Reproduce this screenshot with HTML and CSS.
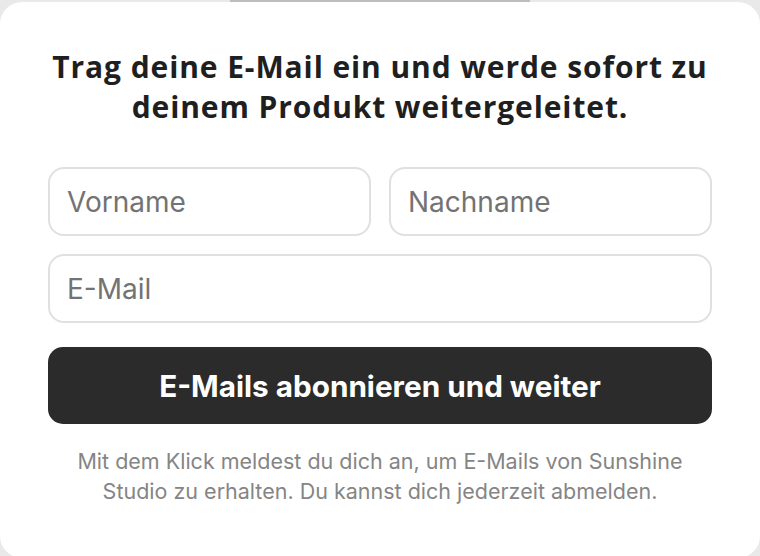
FILE: index.html
```html
<!DOCTYPE html>
<html lang="de">

<head>
    <title>Newsletter</title>
    <meta charset="utf-8">
    <meta name="viewport" content="width=device-width, initial-scale=1.0">
    <link rel="stylesheet" href="styles.css">
</head>

<body>
    <div class="top-handle"></div>
    <div class="card">
        <h2 class="headline">
            Trag deine E-Mail ein und werde sofort zu<br>
            deinem Produkt weitergeleitet.
        </h2>
        <form class="signup-form" onsubmit="return false">
            <div class="name-row">
                <input class="field" type="text" placeholder="Vorname">
                <input class="field" type="text" placeholder="Nachname">
            </div>
            <input class="field" type="email" placeholder="E-Mail">
            <button class="btn-subscribe" type="submit">E-Mails abonnieren und weiter</button>
        </form>
        <p class="legal">
            Mit dem Klick meldest du dich an, um E-Mails von Sunshine<br>
            Studio zu erhalten. Du kannst dich jederzeit abmelden.
        </p>
    </div>
</body>

</html>
```

FILE: styles.css
```css
body {
    padding: 0;
    margin: 0;
    overflow: hidden;
    background: #e9e9e9;
    height: 556px;
}

.top-handle {
    position: absolute;
    top: 0;
    left: 230px;
    width: 300px;
    height: 2px;
    background: #bdbdbd;
}

.card {
    box-sizing: border-box;
    height: 556px;
    margin-top: 2px;
    padding: 45px 48px 0;
    background: #FFFFFF;
    border-radius: 22px;
    text-align: center;
}

.headline {
    font-family: 'Open Sans', sans-serif;
    font-weight: 700;
    font-size: 30px;
    line-height: 40px;
    letter-spacing: 0.9px;
    color: #1f1f1f;
    margin: 0 0 40px;
}

.signup-form {
    display: flex;
    flex-direction: column;
    gap: 18px;
}

.name-row {
    display: flex;
    gap: 18px;
}

.field {
    box-sizing: border-box;
    width: 100%;
    height: 69px;
    padding: 0 17px;
    border: 2px solid #e0e0e0;
    border-radius: 16px;
    font-family: 'Inter', sans-serif;
    font-size: 28px;
    color: #333;
    background: #FFFFFF;
    outline: none;
}

.name-row .field {
    flex: 1;
    min-width: 0;
}

.field::placeholder {
    color: #737373;
}

.btn-subscribe {
    height: 77px;
    margin-top: 6px;
    border: none;
    border-radius: 15px;
    background: #2b2b2b;
    color: #FFFFFF;
    font-family: 'Inter', sans-serif;
    font-weight: 700;
    font-size: 29.7px;
    cursor: pointer;
}

.legal {
    font-family: 'Inter', sans-serif;
    font-size: 21.5px;
    line-height: 30px;
    color: #858585;
    margin: 22px 0 0;
}
```
